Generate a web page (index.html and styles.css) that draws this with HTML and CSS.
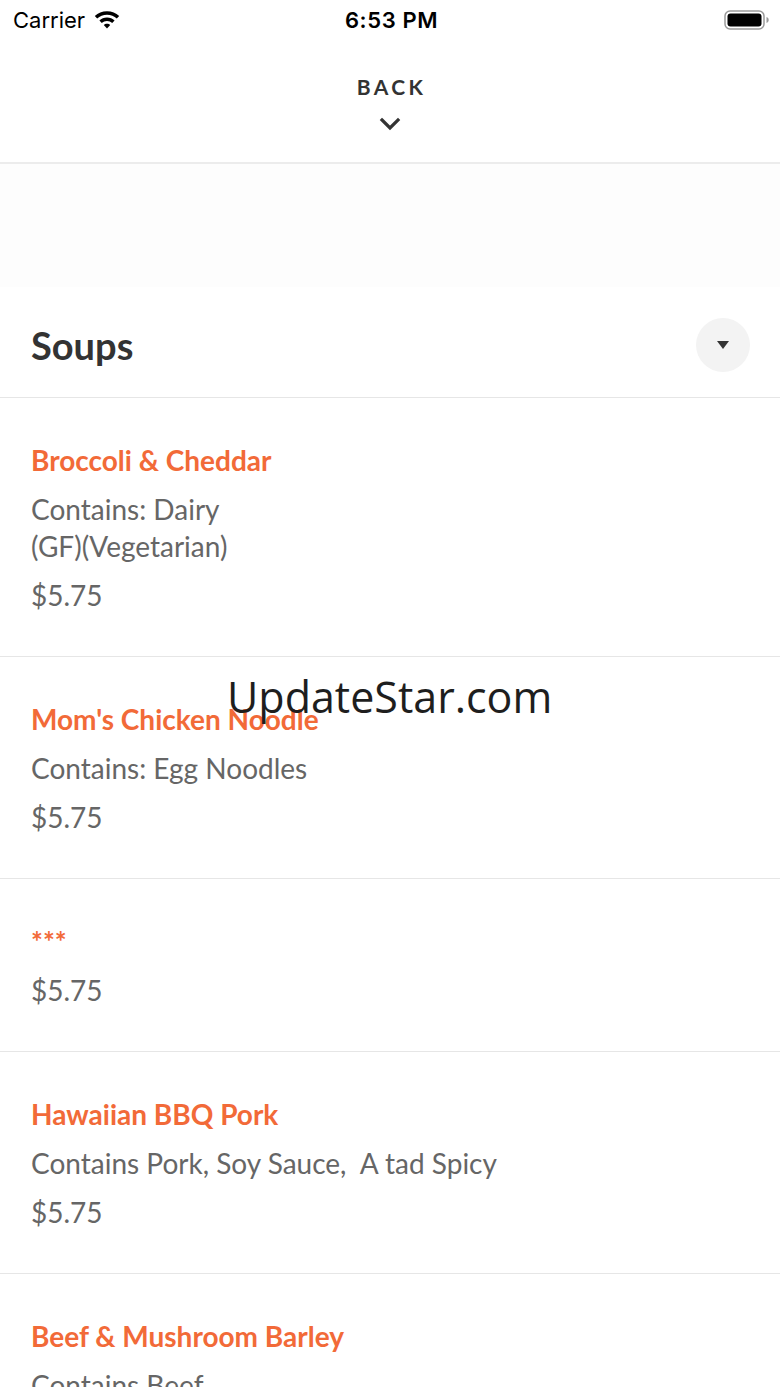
FILE: index.html
```html
<!DOCTYPE html>
<html>
<head>
<meta charset="utf-8">
<link rel="stylesheet" href="styles.css">
</head>
<body>
<div class="screen">
  <div class="status">
    <div class="status-left">
      <span class="carrier">Carrier</span>
      <svg class="wifi" width="28" height="22" viewBox="0 0 28 22">
        <path d="M14 3.2C9.2 3.2 5 5 1.8 8.1L4.2 10.6C6.8 8.1 10.2 6.7 14 6.7S21.2 8.1 23.8 10.6L26.2 8.1C23 5 18.8 3.2 14 3.2Z" fill="#000"/>
        <path d="M14 9.6C11 9.6 8.4 10.7 6.4 12.6L8.8 15.1C10.2 13.8 12 13 14 13S17.8 13.8 19.2 15.1L21.6 12.6C19.6 10.7 17 9.6 14 9.6Z" fill="#000"/>
        <path d="M14 15.8C12.7 15.8 11.6 16.3 10.8 17.1L14 20.4L17.2 17.1C16.4 16.3 15.3 15.8 14 15.8Z" fill="#000"/>
      </svg>
    </div>
    <div class="time">6:53 PM</div>
    <div class="status-right">
      <svg width="46" height="22" viewBox="0 0 46 22">
        <rect x="1" y="2" width="39" height="18" rx="5" ry="5" fill="none" stroke="#9a9a9a" stroke-width="1.5"/>
        <rect x="3.5" y="4.5" width="34" height="13" rx="3" ry="3" fill="#000"/>
        <path d="M42.5 8v6c1.4-.4 2.2-1.6 2.2-3s-.8-2.6-2.2-3z" fill="#9a9a9a"/>
      </svg>
    </div>
  </div>
  <div class="nav">
    <div class="back">BACK</div>
    <svg class="chev" width="22" height="14" viewBox="0 0 22 14">
      <path d="M3 3l8 8 8-8" fill="none" stroke="#333" stroke-width="3.2" stroke-linecap="square"/>
    </svg>
  </div>
  <div class="spacer"></div>
  <div class="section-head">
    <h1 class="section-title">Soups</h1>
    <div class="toggle">
      <svg width="14" height="10" viewBox="0 0 14 10"><path d="M1 1h12L7 9z" fill="#333"/></svg>
    </div>
  </div>
  <div class="item">
    <div class="item-title">Broccoli &amp; Cheddar</div>
    <div class="item-desc">Contains: Dairy<br>(GF)(Vegetarian)</div>
    <div class="item-price">$5.75</div>
  </div>
  <div class="item">
    <div class="item-title">Mom's Chicken Noodle</div>
    <div class="item-desc">Contains: Egg Noodles</div>
    <div class="item-price">$5.75</div>
  </div>
  <div class="item">
    <div class="item-title">***</div>
    <div class="item-price">$5.75</div>
  </div>
  <div class="item">
    <div class="item-title">Hawaiian BBQ Pork</div>
    <div class="item-desc">Contains Pork, Soy Sauce,&nbsp; A tad Spicy</div>
    <div class="item-price">$5.75</div>
  </div>
  <div class="item">
    <div class="item-title">Beef &amp; Mushroom Barley</div>
    <div class="item-desc">Contains Beef</div>
    <div class="item-price">$5.75</div>
  </div>
  <div class="watermark">UpdateStar.com</div>
</div>
</body>
</html>
```
FILE: styles.css
```css
html, body {
  margin: 0;
  padding: 0;
  background: #fff;
}
.screen {
  position: relative;
  width: 780px;
  height: 1387px;
  overflow: hidden;
  font-family: Lato, "Noto Sans", sans-serif;
}
.status {
  height: 40px;
  display: flex;
  align-items: center;
  justify-content: space-between;
  padding: 0 10px 0 13px;
  font-family: Inter, "Liberation Sans", sans-serif;
  color: #000;
}
.status-left {
  display: flex;
  align-items: center;
  width: 200px;
}
.carrier {
  font-size: 22px;
  letter-spacing: 0;
}
.wifi {
  margin-left: 8px;
  margin-top: -3px;
}
.time {
  font-size: 22px;
  font-weight: 600;
  letter-spacing: 0.6px;
}
.status-right {
  width: 200px;
  display: flex;
  justify-content: flex-end;
}
.nav {
  display: flex;
  flex-direction: column;
  align-items: center;
  border-bottom: 2px solid #ececec;
  box-sizing: border-box;
  height: 124px;
}
.back {
  margin-top: 35px;
  font-size: 21px;
  font-weight: 700;
  letter-spacing: 3.4px;
  color: #333;
  line-height: 24px;
  padding-left: 3px;
}
.chev {
  margin-top: 18px;
}
.spacer {
  height: 123px;
  background: #fdfdfd;
}
.section-head {
  height: 111px;
  box-sizing: border-box;
  padding: 6px 30px 0 31px;
  display: flex;
  align-items: center;
  justify-content: space-between;
  border-bottom: 1px solid #e6e6e6;
}
.section-title {
  margin: 0;
  font-size: 38px;
  font-weight: 700;
  color: #333;
}
.toggle {
  width: 54px;
  height: 54px;
  border-radius: 50%;
  background: #f3f3f3;
  display: flex;
  align-items: center;
  justify-content: center;
}
.item {
  padding: 46px 31px 42px;
  border-bottom: 1px solid #e6e6e6;
}
.item:nth-of-type(1) {
  padding-bottom: 43px;
}
.item-title {
  font-size: 28px;
  font-weight: 700;
  line-height: 32px;
  color: #f26a38;
  margin-bottom: 15px;
}
.item-desc {
  font-size: 28px;
  line-height: 37px;
  color: #666;
  margin-bottom: 12px;
}
.item-price {
  font-size: 28px;
  line-height: 37px;
  color: #666;
}
.watermark {
  position: absolute;
  left: 227px;
  top: 668px;
  font-family: "Open Sans", "DejaVu Sans", sans-serif;
  font-size: 43px;
  line-height: 58px;
  color: #1e1e1e;
}
```
